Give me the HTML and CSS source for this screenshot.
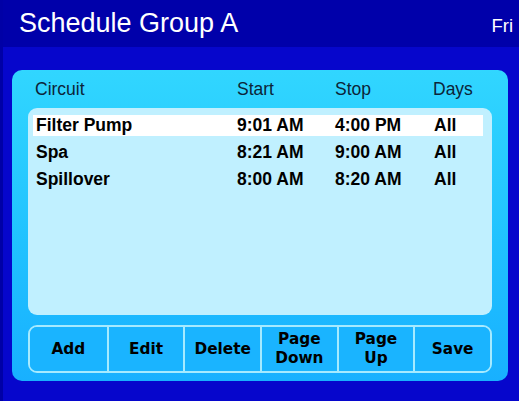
FILE: index.html
```html
<!DOCTYPE html>
<html>
<head>
<meta charset="utf-8">
<link rel="stylesheet" href="styles.css">
</head>
<body>
<div class="screen">
  <header class="topbar">
    <div class="title">Schedule Group A</div>
    <div class="day">Fri</div>
  </header>
  <main class="panel">
    <div class="colheads">
      <span>Circuit</span><span>Start</span><span>Stop</span><span>Days</span>
    </div>
    <div class="list">
      <div class="row selected"><span>Filter Pump</span><span>9:01 AM</span><span>4:00 PM</span><span>All</span></div>
      <div class="row"><span>Spa</span><span>8:21 AM</span><span>9:00 AM</span><span>All</span></div>
      <div class="row"><span>Spillover</span><span>8:00 AM</span><span>8:20 AM</span><span>All</span></div>
    </div>
    <div class="buttons">
      <div class="btn">Add</div>
      <div class="btn">Edit</div>
      <div class="btn">Delete</div>
      <div class="btn">Page<br>Down</div>
      <div class="btn">Page<br>Up</div>
      <div class="btn">Save</div>
    </div>
  </main>
</div>
</body>
</html>
```
FILE: styles.css
```css
html, body {
  margin: 0;
  padding: 0;
  background: #0606cc;
}
.screen {
  width: 516px;
  height: 401px;
  border-left: 3px solid #0000a6;
  background: #0606cc;
  font-family: "Liberation Sans", Arial, sans-serif;
  display: flex;
  flex-direction: column;
  overflow: hidden;
}
.topbar {
  height: 47px;
  background: #0000aa;
  display: flex;
  align-items: center;
  justify-content: space-between;
  padding: 0 6px 0 16px;
  color: #ffffff;
}
.title {
  font-size: 27px;
  line-height: 30px;
  margin-top: -2px;
}
.day {
  font-size: 18.5px;
  line-height: 22px;
  margin-top: 4px;
}
.panel {
  margin: 23px 0 0 9px;
  width: 464px;
  height: 303px;
  padding: 0 16px 8px 16px;
  border-radius: 10px;
  background: linear-gradient(#31d6ff, #20c2ff 55%, #18b0ff);
  display: flex;
  flex-direction: column;
}
.colheads {
  height: 38px;
  display: grid;
  grid-template-columns: 202px 98px 98px 1fr;
  align-items: center;
  padding-left: 7px;
  font-size: 17.5px;
  color: #0c2438;
}
.list {
  height: 193px;
  background: #c0f0ff;
  border-radius: 9px;
  padding: 7px 9px 7px 5px;
  display: flex;
  flex-direction: column;
  gap: 6px;
}
.row {
  height: 21px;
  display: grid;
  grid-template-columns: 201px 98px 99px 1fr;
  align-items: center;
  padding-left: 3px;
  font-size: 17.5px;
  font-weight: bold;
  color: #000000;
}
.row.selected {
  background: #ffffff;
}
.buttons {
  margin-top: 10px;
  height: 44px;
  border: 2px solid #a6eaff;
  border-radius: 9px;
  display: grid;
  grid-template-columns: repeat(6, 1fr);
  overflow: hidden;
}
.btn {
  display: flex;
  align-items: center;
  justify-content: center;
  text-align: center;
  font-family: "DejaVu Sans", Verdana, sans-serif;
  font-weight: bold;
  font-size: 15.3px;
  line-height: 19px;
  color: #000000;
  border-left: 2px solid #a6eaff;
  background: #1ab4ff;
}
.btn:first-child {
  border-left: none;
}
```
